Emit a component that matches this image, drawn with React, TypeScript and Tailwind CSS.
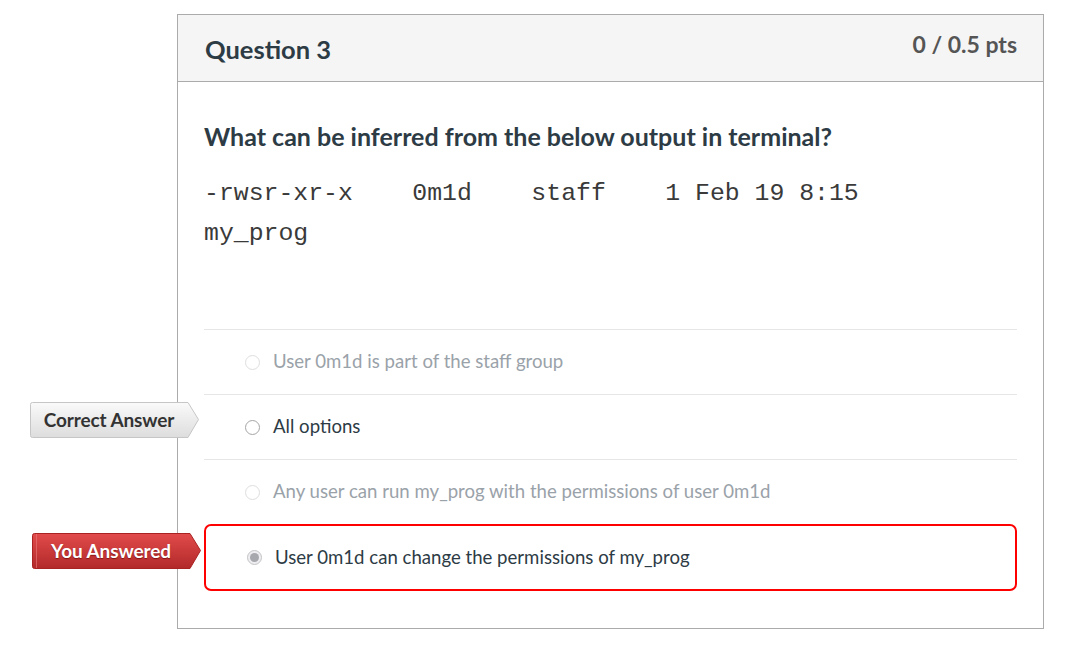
import React from "react";

type Option = {
  text: string;
  tone: "faded" | "normal" | "picked";
  tag?: "correct" | "answered";
};

const options: Option[] = [
  { text: "User 0m1d is part of the staff group", tone: "faded" },
  { text: "All options", tone: "normal", tag: "correct" },
  { text: "Any user can run my_prog with the permissions of user 0m1d", tone: "faded" },
  { text: "User 0m1d can change the permissions of my_prog", tone: "picked", tag: "answered" },
];

function Tag({ kind }: { kind: "correct" | "answered" }) {
  const red = kind === "answered";
  const id = red ? "tagRed" : "tagGray";
  return (
    <div className="relative w-[170px] h-[36px] flex items-center">
      <svg className="absolute inset-0" width="170" height="36" viewBox="0 0 170 36">
        <defs>
          <linearGradient id={id} x1="0" y1="0" x2="0" y2="1">
            <stop offset="0" stopColor={red ? "#e24b4b" : "#fafafa"} />
            <stop offset="1" stopColor={red ? "#b2292a" : "#dddddd"} />
          </linearGradient>
        </defs>
        <path
          d="M2.5 0.5 H158 L168.5 17.5 L158 35.5 H2.5 Q0.5 35.5 0.5 33.5 V2.5 Q0.5 0.5 2.5 0.5 Z"
          fill={`url(#${id})`}
          stroke={red ? "#a92323" : "#c6c6c6"}
        />
        {red && <line x1="4.5" y1="1" x2="4.5" y2="35" stroke="#e97b7b" strokeOpacity="0.6" />}
      </svg>
      <span
        className={
          "relative w-[158px] text-center text-[19px] font-bold tracking-[-0.1px] " +
          (red ? "text-white [text-shadow:0_1px_1px_rgba(90,0,0,0.6)]" : "text-[#333333]")
        }
      >
        {red ? "You Answered" : "Correct Answer"}
      </span>
    </div>
  );
}

function Radio({ tone }: { tone: Option["tone"] }) {
  if (tone === "picked") {
    return (
      <span className="w-[15px] h-[15px] rounded-full border border-[#c4c4c8] bg-[#eeeef0] flex items-center justify-center shrink-0">
        <span className="w-[9px] h-[9px] rounded-full bg-[#a7a7ae]" />
      </span>
    );
  }
  return (
    <span
      className={
        "w-[15px] h-[15px] rounded-full border-[1.5px] bg-white shrink-0 " +
        (tone === "faded" ? "border-[#dedede]" : "border-[#a5a5a5]")
      }
    />
  );
}

export default function App() {
  return (
    <div className="min-h-[645px] bg-white pt-[14px] pl-[177px] font-['Lato','Noto_Sans',sans-serif]">
      <div className="w-[867px] border border-[#ababab] bg-white">
        {/* header */}
        <div className="h-[67px] bg-[#f5f5f5] border-b border-[#ababab] flex justify-between pl-[27px] pr-[26px]">
          <h2 className="mt-[18px] text-[25.5px] leading-[32px] font-bold text-[#2d3b45]">Question 3</h2>
          <div className="mt-[14px] text-[23px] leading-[30px] font-bold text-[#555555]">0 / 0.5 pts</div>
        </div>

        {/* body */}
        <div className="px-[26px] pt-[39px] pb-[37px]">
          <p className="text-[25px] leading-[30px] font-bold text-[#2d3b45]">
            What can be inferred from the below output in terminal?
          </p>
          <div className="mt-[22px] font-['Liberation_Mono','Courier_New',monospace] text-[24.8px] leading-[40px] text-[#3a3a3a] whitespace-pre">
            {"-rwsr-xr-x    0m1d    staff    1 Feb 19 8:15"}
            <br />
            {"my_prog"}
          </div>

          <div className="mt-[76px]">
            {options.map((o, i) =>
              o.tone === "picked" ? (
                <div
                  key={i}
                  className="relative h-[67px] border-2 border-[#ff0000] rounded-[7px] flex items-center gap-[13px] pl-[41px]"
                >
                  <div className="absolute left-[-174px] top-[7px]">
                    <Tag kind="answered" />
                  </div>
                  <Radio tone={o.tone} />
                  <span className="text-[18.6px] text-[#2d3b45]">{o.text}</span>
                </div>
              ) : (
                <div
                  key={i}
                  className="relative h-[65px] border-t border-[#e6e6e6] flex items-center gap-[13px] pl-[41px]"
                >
                  {o.tag && (
                    <div className="absolute left-[-174px] top-[7px]">
                      <Tag kind={o.tag} />
                    </div>
                  )}
                  <Radio tone={o.tone} />
                  <span className={"text-[18.6px] " + (o.tone === "faded" ? "text-[#9aa2a9]" : "text-[#2d3b45]")}>
                    {o.text}
                  </span>
                </div>
              )
            )}
          </div>
        </div>
      </div>
    </div>
  );
}
